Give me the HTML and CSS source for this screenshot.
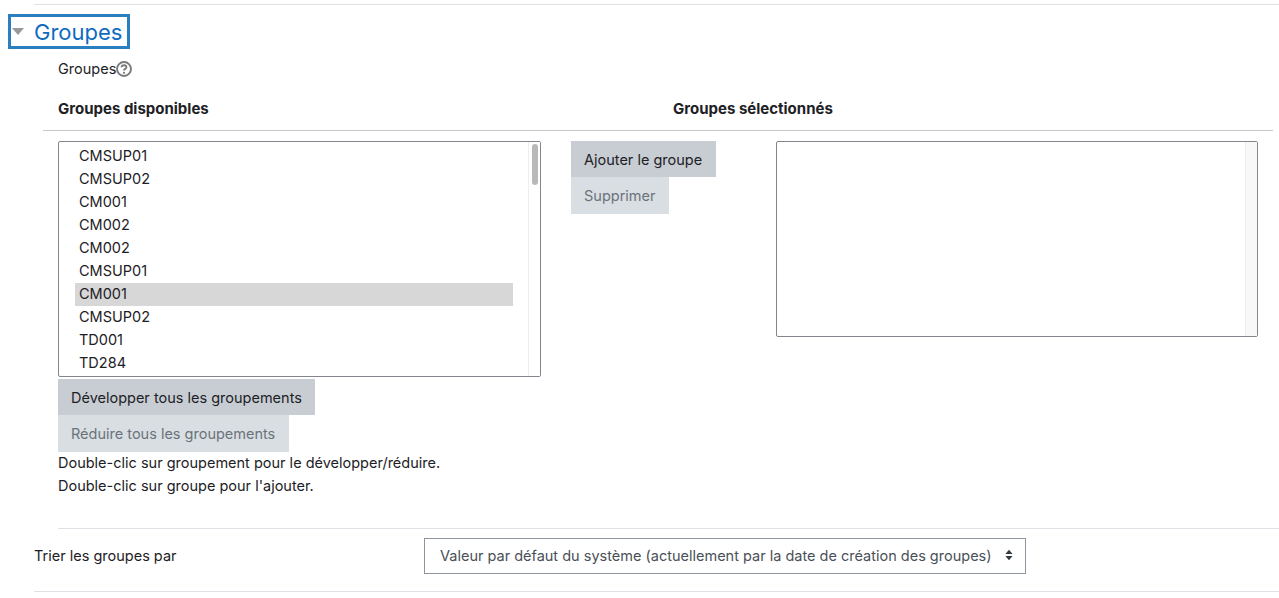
FILE: index.html
```html
<!DOCTYPE html>
<html lang="fr">
<head>
    <meta charset="utf-8">
    <title>Groupes</title>
    <link rel="stylesheet" href="styles.css">
</head>
<body>
    <div class="topRule"></div>

    <div class="sectionHeader">
        <span class="caret"></span>
        <h3 class="sectionTitle">Groupes</h3>
    </div>

    <div class="fieldLabel">
        Groupes<svg class="helpIcon" width="16" height="16" viewBox="0 0 16 16">
            <circle cx="8" cy="8" r="7" fill="none" stroke="#7a7a7a" stroke-width="1.900"/>
            <path d="M5.600 6.300c0-1.300 1.100-2.100 2.400-2.100s2.400.8 2.400 2c0 1.800-2.400 1.600-2.400 3.300" fill="none" stroke="#7a7a7a" stroke-width="1.900"/>
            <circle cx="8" cy="11.800" r="1.100" fill="#7a7a7a"/>
        </svg>
    </div>

    <div class="pickerHeadings">
        <div class="headingLeft">Groupes disponibles</div>
        <div>Groupes sélectionnés</div>
    </div>

    <div class="picker">
        <div class="availableCol">
            <div class="listBox availableList">
                <div class="listItems">
                    <div class="listItem">CMSUP01</div>
                    <div class="listItem">CMSUP02</div>
                    <div class="listItem">CM001</div>
                    <div class="listItem">CM002</div>
                    <div class="listItem">CM002</div>
                    <div class="listItem">CMSUP01</div>
                    <div class="listItem selected">CM001</div>
                    <div class="listItem">CMSUP02</div>
                    <div class="listItem">TD001</div>
                    <div class="listItem">TD284</div>
                </div>
                <div class="scrollTrack"><div class="scrollThumb"></div></div>
            </div>
            <div class="buttonStack">
                <button type="button" class="btn">Développer tous les groupements</button>
                <button type="button" class="btn disabled">Réduire tous les groupements</button>
            </div>
            <p class="hint">Double-clic sur groupement pour le développer/réduire.</p>
            <p class="hint">Double-clic sur groupe pour l'ajouter.</p>
        </div>

        <div class="buttonStack middleCol">
            <button type="button" class="btn">Ajouter le groupe</button>
            <button type="button" class="btn disabled">Supprimer</button>
        </div>

        <div class="listBox selectedList">
            <div class="listItems"></div>
            <div class="scrollTrack plain"></div>
        </div>
    </div>

    <div class="midRule"></div>

    <div class="sortRow">
        <label class="sortLabel">Trier les groupes par</label>
        <div class="selectBox">
            <span>Valeur par défaut du système (actuellement par la date de création des groupes)</span>
            <svg width="8" height="12" viewBox="0 0 8 12">
                <path d="M4 .8 7.600 5H.4zM4 11.200.4 7h7.200z" fill="#343a40"/>
            </svg>
        </div>
    </div>

    <div class="bottomRule"></div>
</body>
</html>
```

FILE: styles.css
```css
* {
    box-sizing: border-box;
}

body {
    margin: 0;
    padding-top: 4px;
    background: #ffffff;
    color: #1d2125;
    font-family: Inter, "Liberation Sans", sans-serif;
    font-size: 14.5px;
    line-height: 21px;
    overflow: hidden;
}

.topRule {
    height: 1px;
    margin-left: 34px;
    background: #dee2e6;
}

.sectionHeader {
    display: flex;
    align-items: center;
    width: 122px;
    height: 35px;
    margin: 9px 0 0 8px;
    padding-left: 1px;
    border: 3px solid #2a7fbf;
}

.caret {
    width: 0;
    height: 0;
    margin-right: 10px;
    border-left: 6px solid transparent;
    border-right: 6px solid transparent;
    border-top: 7px solid #999999;
}

.sectionTitle {
    margin: 2px 0 0;
    color: #0f6cbf;
    font-size: 22px;
    font-weight: 400;
    line-height: 29px;
}

.fieldLabel {
    display: flex;
    align-items: center;
    height: 21px;
    margin: 9px 0 0 58px;
}

.pickerHeadings {
    display: flex;
    height: 33px;
    margin: 19px 6px 0 43px;
    padding-left: 15px;
    border-bottom: 1px solid #c8c8c8;
    font-size: 15px;
    font-weight: 700;
}

.headingLeft {
    width: 615px;
}

.picker {
    display: flex;
    align-items: flex-start;
    margin: 10px 0 0 58px;
}

.availableCol {
    width: 483px;
}

.listBox {
    display: flex;
    border: 1px solid #85858f;
    border-radius: 2px;
}

.availableList {
    height: 236px;
}

.selectedList {
    width: 482px;
    height: 196px;
    margin-left: 61px;
}

.listItems {
    flex: 1;
    padding: 3px 15px 0 16px;
}

.listItem {
    height: 23px;
    padding-left: 4px;
    line-height: 21px;
}

.selected {
    background: #d7d7d7;
}

.scrollTrack {
    width: 12px;
    padding: 2px 3px;
    background: #ffffff;
    border-left: 1px solid #eeeeee;
}

.plain {
    background: #f8f8f8;
}

.scrollThumb {
    width: 6px;
    height: 41px;
    border-radius: 3px;
    background: #b9b9b9;
}

.buttonStack {
    display: flex;
    flex-direction: column;
    align-items: flex-start;
    margin-top: 2px;
}

.middleCol {
    width: 144px;
    margin: 0 0 0 30px;
}

.btn {
    height: 36px;
    padding: 0 13.4px 0 13px;
    border: 0;
    border-radius: 0;
    background: #c7cdd3;
    color: #1d2125;
    font-family: inherit;
    font-size: 14.5px;
    white-space: nowrap;
}

.disabled {
    height: 37px;
    background: #d9dee2;
    color: #6a737b;
}

.hint {
    margin: 0;
    height: 23px;
    line-height: 21px;
}

.midRule {
    height: 1px;
    margin: 30px 0 0 58px;
    background: #dee2e6;
}

.sortRow {
    display: flex;
    align-items: center;
    height: 36px;
    margin: 9px 0 0 34px;
}

.sortLabel {
    width: 390px;
    padding-bottom: 2px;
}

.selectBox {
    display: flex;
    align-items: center;
    justify-content: space-between;
    width: 602px;
    height: 36px;
    padding: 0 12px 2px 15px;
    border: 1px solid #8f959e;
    color: #495057;
    white-space: nowrap;
}

.bottomRule {
    height: 1px;
    margin: 17px 0 0 34px;
    background: #dee2e6;
}
```
